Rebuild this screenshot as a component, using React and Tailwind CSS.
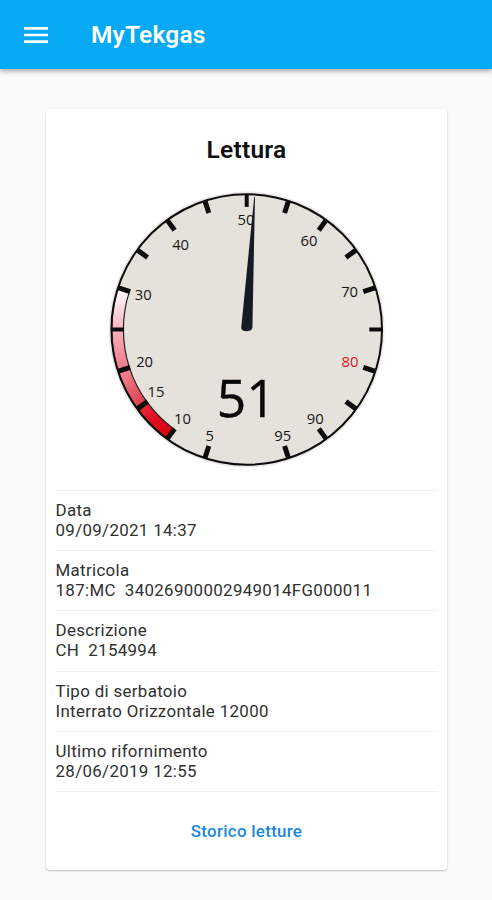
const CX = 246.7;
const CY = 329.5;

const polar = (r, deg) => {
  const a = (deg * Math.PI) / 180;
  return [CX + r * Math.sin(a), CY - r * Math.cos(a)];
};

const labels = [
  ['5', 209.8, 440.8], ['10', 182.5, 424], ['15', 156, 397.2], ['20', 144.6, 367.2],
  ['30', 143.2, 299.8], ['40', 180.6, 250], ['50', 246, 225], ['60', 309, 246.3],
  ['70', 349.6, 297.3], ['80', 350, 367.2], ['90', 315.3, 424.2], ['95', 282.8, 440.8],
];

// Low-level band segments, keyed by the start angle.
const bands = [
  { from: 216, fill: 'url(#b1)' },
  { from: 234, fill: 'url(#b2)' },
  { from: 252, fill: 'url(#b3)' },
  { from: 270, fill: 'url(#b4)' },
];

function segment(from) {
  const [ax, ay] = polar(135, from);
  const [bx, by] = polar(135, from + 18);
  const [cx, cy] = polar(123.3, from + 18);
  const [dx, dy] = polar(123.3, from);
  return `M${ax} ${ay}A135 135 0 0 1 ${bx} ${by}L${cx} ${cy}A123.3 123.3 0 0 0 ${dx} ${dy}Z`;
}

function Gauge() {
  const ticks = Array.from({ length: 20 }, (_, i) => i * 18).filter((a) => a !== 180);
  return (
    <svg viewBox="106 189 281 281" className="h-[281px] w-[281px] shrink-0" fontFamily='"Open Sans", "Noto Sans", sans-serif'>
      <defs>
        <linearGradient id="b1" x1="0" y1="0" x2="1" y2="1"><stop stopColor="#e63444" /><stop offset=".5" stopColor="#dc0a1c" /><stop offset="1" stopColor="#d8000f" /></linearGradient>
        <linearGradient id="b2" x1="0" y1="0" x2=".6" y2="1"><stop stopColor="#f3909b" /><stop offset="1" stopColor="#e03f4e" /></linearGradient>
        <linearGradient id="b3" x1="0" y1="0" x2="0" y2="1"><stop stopColor="#f7b0ba" /><stop offset="1" stopColor="#ee7785" /></linearGradient>
        <linearGradient id="b4" x1="0" y1="0" x2="0" y2="1"><stop stopColor="#ffffff" /><stop offset="1" stopColor="#f7b3be" /></linearGradient>
      </defs>
      <circle cx={CX} cy={CY} r="138" fill="#e5e3dc" opacity=".75" />
      <circle cx={CX} cy={CY} r="135.3" fill="#e4e2da" />
      {bands.map((b) => (
        <path key={b.from} d={segment(b.from)} fill={b.fill} stroke="#222" strokeWidth="1.2" />
      ))}
      <circle cx={CX} cy={CY} r="135.3" fill="none" stroke="#0c0c0c" strokeWidth="2" />
      {ticks.map((a) => {
        const [x1, y1] = polar(135.5, a);
        const [x2, y2] = polar(122.6, a);
        return <line key={a} x1={x1} y1={y1} x2={x2} y2={y2} stroke="#0c0c0c" strokeWidth={a % 90 === 0 ? 4 : 5} />;
      })}
      {labels.map(([t, x, y]) => (
        <text key={t} x={x} y={y} textAnchor="middle" fontSize="14.8" fill={t === '80' ? '#e01525' : '#151515'}>{t}</text>
      ))}
      <path d="M254.2 197L255 197L252.4 328Q251 331.2 246.5 331.2Q242 331.2 241.2 328Z" fill="#171924" />
      <text x="246.3" y="417.3" textAnchor="middle" fontSize="51.5" fill="#080808" stroke="#080808" strokeWidth=".4">51</text>
    </svg>
  );
}

const rows = [
  ['Data', '09/09/2021 14:37'],
  ['Matricola', '187:MC  34026900002949014FG000011'],
  ['Descrizione', 'CH  2154994'],
  ['Tipo di serbatoio', 'Interrato Orizzontale 12000'],
  ['Ultimo rifornimento', '28/06/2019 12:55'],
];

export default function App() {
  return (
    <div className="flex h-[900px] w-[492px] flex-col overflow-hidden bg-[#fafafa] font-[Roboto,sans-serif]">
      <header className="flex h-[69px] shrink-0 items-center gap-[43px] bg-[#05a9f4] pl-6 text-white shadow-[0_2px_5px_rgba(0,0,0,0.35)]">
        <svg viewBox="0 0 24 16" className="h-4 w-6" fill="currentColor">
          <path d="M0 0h24v2.7H0zM0 6.65h24v2.7H0zM0 13.3h24V16H0z" />
        </svg>
        <h1 className="pt-px text-[24.5px] font-semibold leading-7 tracking-[0.18px]">MyTekgas</h1>
      </header>
      <main className="ml-[46px] mt-10 flex h-[761px] w-[401px] flex-col items-center rounded-[4px] bg-white pt-[27px] shadow-[0_1px_2px_rgba(0,0,0,0.25)]">
        <h2 className="text-[24.5px] font-semibold leading-7 tracking-[0.25px] text-[#111]">Lettura</h2>
        <div className="mt-[25px] flex"><Gauge /></div>
        <dl className="mt-[19.8px] w-[382px] border-t border-[#f0f0f0] text-[16.9px] leading-5 tracking-[0.33px] text-[#303030]">
          {rows.map(([name, value]) => (
            <div key={name} className="flex h-[60.25px] flex-col justify-center whitespace-pre border-b border-[#f0f0f0] pb-[1px]">
              <dt>{name}</dt>
              <dd>{value}</dd>
            </div>
          ))}
        </dl>
        <button className="mt-[29.2px] text-[16.9px] font-medium leading-5 tracking-[0.3px] text-[#1b87e0]">Storico letture</button>
      </main>
    </div>
  );
}
